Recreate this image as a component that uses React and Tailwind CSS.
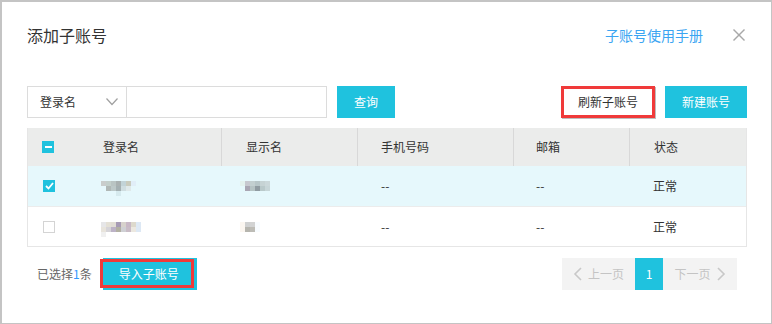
import React from "react";

const cols = "grid grid-cols-[50px_143px_136px_156px_116px_117px]";

const rows = [
  {
    id: 1,
    checked: true,
    login: [
      ["#c9cdcc", "#c3cfcb", "#b9c4c3", "#a9b1b1", "#c2d3d7", "#c9cbbd", "#e1eef8", "#e6f8fc"],
      ["#e6f8fc", "#b0b8b6", "#bcc8c8", "#a4b0b2", "#cfdde0", "#dfe9ea", "#e6f8fc", "#e6f8fc"],
      ["#e6f8fc", "#e6f8fc", "#e6f8fc", "#d6eaee", "#e6f8fc", "#e6f8fc", "#e6f8fc", "#e6f8fc"],
    ],
    display: [
      ["#e3f1ee", "#c7c8cf", "#c2cfd0", "#b7c6c8", "#c6d3d4", "#cbd8da", "#e6f8fc"],
      ["#e6f8fc", "#a9a6b3", "#b5c3c4", "#8f9ba1", "#b9c9ca", "#c7d6d8", "#e6f8fc"],
    ],
  },
  {
    id: 2,
    checked: false,
    login: [
      ["#e6e6e8", "#e4e0d6", "#e1ddd4", "#a79bb4", "#d7d2cc", "#c8b8c6", "#ddd9cc", "#dde8f4", "#ffffff"],
      ["#e8e4dc", "#d6d4d8", "#bcb2c6", "#b2b0a2", "#cfd0d4", "#c9bcc6", "#ece8e0", "#dde8f4", "#ffffff"],
      ["#f0f0f0", "#ffffff", "#ffffff", "#ffffff", "#ffffff", "#ffffff", "#ffffff", "#ffffff", "#ffffff"],
    ],
    display: [
      ["#fbf6f0", "#cfd0d0", "#d2d3d3", "#f8fcff"],
      ["#fbf6f0", "#b6b5ae", "#bdbcb6", "#f8fcff"],
    ],
  },
];

const Mosaic = ({ blocks }) => (
  <div className="flex flex-col">
    {blocks.map((line, i) => (
      <div key={i} className="flex">
        {line.map((c, j) => (
          <span key={j} className="w-[5px] h-[5px]" style={{ backgroundColor: c }} />
        ))}
      </div>
    ))}
  </div>
);

const Chevron = ({ dir }) => (
  <svg width="9" height="14" viewBox="0 0 9 14" fill="none" stroke="#c8c8c8" strokeWidth="1.6">
    {dir === "left" ? <polyline points="8,1 2,7 8,13" /> : <polyline points="1,1 7,7 1,13" />}
  </svg>
);

const App = () => {
  return (
    <div className="w-[772px] h-[324px] bg-white border-t-2 border-l-2 border-r border-b border-[#c4c4c4] pl-[25px] pr-[24px] font-['Noto_Sans_CJK_SC',sans-serif] text-[#333]">
      <div className="flex items-center h-[20px] mt-[23px]">
        <h1 className="text-[16px] text-[#333] leading-none">添加子账号</h1>
        <a className="ml-auto text-[14px] text-[#3ba5f2] leading-none">子账号使用手册</a>
        <svg className="ml-[30px] mr-[2px]" width="12" height="12" viewBox="0 0 12 12" stroke="#a8a8a8" strokeWidth="1.4">
          <line x1="0.5" y1="0.5" x2="11.5" y2="11.5" />
          <line x1="11.5" y1="0.5" x2="0.5" y2="11.5" />
        </svg>
      </div>

      <div className="flex items-center mt-[41px] h-[32px]">
        <div className="w-[100px] h-[32px] border border-[#dcdcdc] flex items-center pl-[12px] pr-[8px] text-[12px]">
          <span>登录名</span>
          <svg className="ml-auto" width="12" height="8" viewBox="0 0 12 8" fill="none" stroke="#a0a0a0" strokeWidth="1.2">
            <polyline points="0.5,0.5 6,6.5 11.5,0.5" />
          </svg>
        </div>
        <input className="w-[200px] h-[32px] border border-l-0 border-[#dcdcdc] outline-none px-2 text-[12px]" />
        <button className="ml-[10px] w-[58px] h-[32px] bg-[#1fc2de] text-white text-[12px]">查询</button>
        <button className="ml-auto w-[94px] h-[32px] bg-white border-[3px] border-[#f03a3a] shadow-[1px_1px_0_#bdbdbd] text-[12px] text-[#333]">
          刷新子账号
        </button>
        <button className="ml-[10px] w-[82px] h-[32px] bg-[#1fc2de] text-white text-[12px]">新建账号</button>
      </div>

      <div className="mt-[10px] w-[720px] border-x border-b border-[#e6e6e6]">
        <div className={`${cols} h-[38px] bg-[#ebeceb] text-[12px]`}>
          <div className="flex items-center pl-[14px]">
            <span className="w-[12px] h-[12px] bg-[#1fc2de] flex items-center justify-center">
              <span className="w-[7px] h-[2px] bg-white" />
            </span>
          </div>
          <div className="flex items-center pl-[25px]">登录名</div>
          <div className="flex items-center pl-[24px] border-l border-[#d8d8d8]">显示名</div>
          <div className="flex items-center pl-[23px] border-l border-[#d8d8d8]">手机号码</div>
          <div className="flex items-center pl-[22px] border-l border-[#d8d8d8]">邮箱</div>
          <div className="flex items-center pl-[24px] border-l border-[#d8d8d8]">状态</div>
        </div>
        {rows.map((r, i) => (
          <div
            key={r.id}
            className={`${cols} h-[40px] text-[12px] ${r.checked ? "bg-[#e6f8fc]" : "bg-white"} ${i > 0 ? "border-t border-[#ececec]" : ""}`}
          >
            <div className="flex items-center pl-[15px]">
              {r.checked ? (
                <span className="w-[12px] h-[12px] bg-[#1fc2de] flex items-center justify-center">
                  <svg width="9" height="8" viewBox="0 0 9 8" fill="none" stroke="white" strokeWidth="1.8">
                    <polyline points="1,4 3.5,6.5 8,1" />
                  </svg>
                </span>
              ) : (
                <span className="w-[12px] h-[12px] border border-[#d4d4d4] bg-white" />
              )}
            </div>
            <div className="flex items-center pl-[23px] pt-[5px]">
              <Mosaic blocks={r.login} />
            </div>
            <div className="flex items-center pl-[19px]">
              <Mosaic blocks={r.display} />
            </div>
            <div className="flex items-center pl-[24px]">--</div>
            <div className="flex items-center pl-[23px]">--</div>
            <div className="flex items-center pl-[24px]">正常</div>
          </div>
        ))}
      </div>

      <div className="flex items-center mt-[11px] h-[32px]">
        <span className="ml-[10px] text-[12px] text-[#666]">
          已选择<span className="text-[#3399ff]">1</span>条
        </span>
        <div className="relative ml-[11px]">
          <button className="w-[94px] h-[32px] bg-[#1fc2de] text-white text-[12px] pr-[2px]">导入子账号</button>
          <span className="absolute left-[-3px] top-[1px] w-[94px] h-[29px] border-[3px] border-[#f03a3a] pointer-events-none" />
        </div>
        <div className="ml-auto mr-[10px] flex h-[32px] bg-[#f3f3f3] text-[12px] text-[#c4c4c4]">
          <div className="w-[73px] flex items-center justify-center gap-[6px]">
            <Chevron dir="left" />
            <span>上一页</span>
          </div>
          <div className="w-[28px] bg-[#1fc2de] text-white flex items-center justify-center">1</div>
          <div className="w-[74px] flex items-center justify-center gap-[6px]">
            <span>下一页</span>
            <Chevron dir="right" />
          </div>
        </div>
      </div>
    </div>
  );
};

export default App;
